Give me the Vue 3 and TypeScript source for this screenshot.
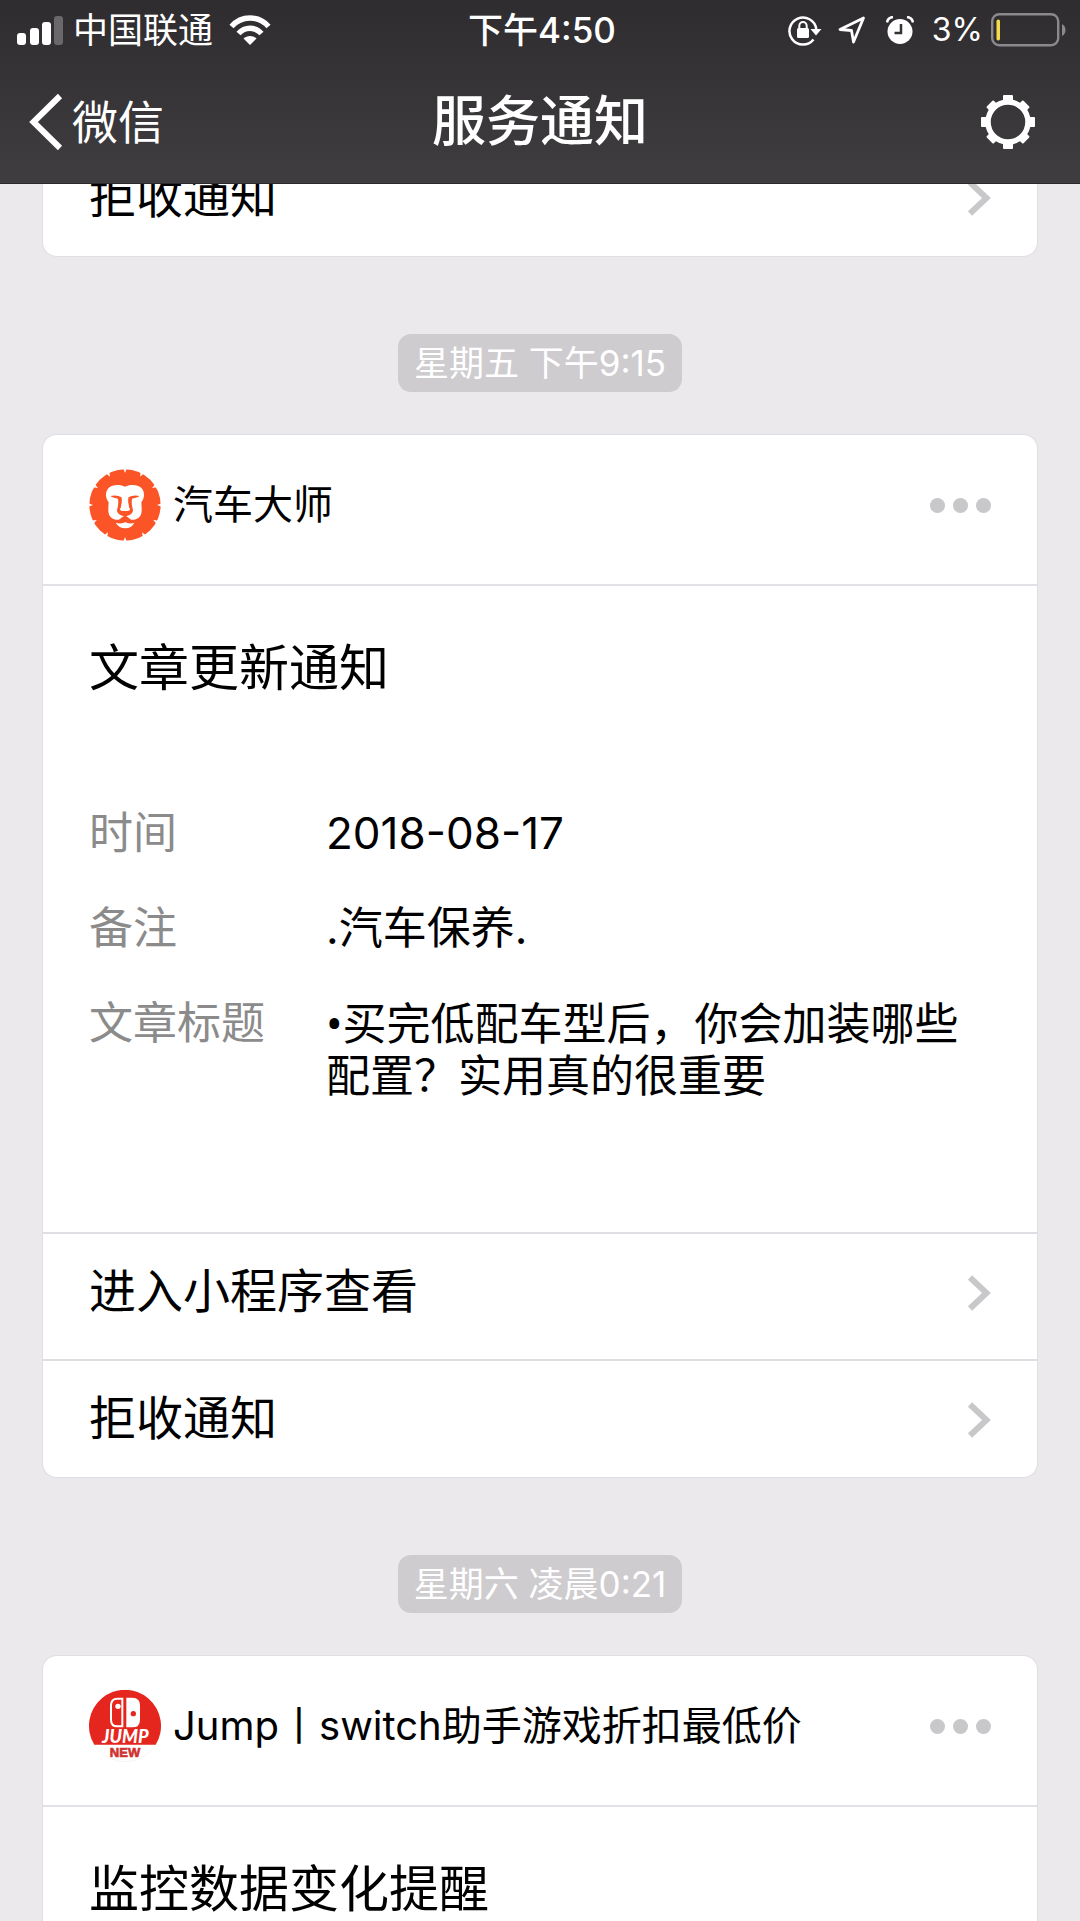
<script setup lang="ts">
interface Field {
  label: string
  value: string
}

interface Notice {
  id: string
  time: string
  app: string
  logo: 'lion' | 'jump'
  title: string
  fields: Field[]
  actions: string[]
}

const notices: Notice[] = [
  {
    id: 'car',
    time: '星期五 下午9:15',
    app: '汽车大师',
    logo: 'lion',
    title: '文章更新通知',
    fields: [
      { label: '时间', value: '2018-08-17' },
      { label: '备注', value: '.汽车保养.' },
      { label: '文章标题', value: '•买完低配车型后，你会加装哪些配置？实用真的很重要' },
    ],
    actions: ['进入小程序查看', '拒收通知'],
  },
  {
    id: 'jump',
    time: '星期六 凌晨0:21',
    app: 'Jump丨switch助手游戏折扣最低价',
    logo: 'jump',
    title: '监控数据变化提醒',
    fields: [],
    actions: [],
  },
]

const gearTeeth = [0, 45, 90, 135, 180, 225, 270, 315]
const maneNotches = [0, 28, 58, 90, 118, 148, 180, 212, 242, 270, 302, 332]
</script>

<template>
  <div class="screen">
    <header class="top">
      <div class="status">
        <div class="status-left">
          <svg class="signal" width="47" height="29" viewBox="0 0 47 29" fill="#fff">
            <rect x="0" y="17" width="9" height="12" rx="3" />
            <rect x="13" y="12" width="9" height="17" rx="3" />
            <rect x="25" y="6" width="9" height="23" rx="3" />
            <rect x="37" y="0" width="9" height="29" rx="3" fill="#6a686b" />
          </svg>
          <span>中国联通</span>
          <svg class="wifi" width="42" height="30" viewBox="0 0 42 30" fill="none" stroke="#fff">
            <path d="M2.5 11.5C12.5 .2 29.5 .2 39.5 11.5" stroke-width="5.5" />
            <path d="M9.5 18.5C16 11.5 26 11.5 32.5 18.5" stroke-width="5.5" />
            <path d="M21 30L14.5 23.5C18 20 24 20 27.5 23.5Z" fill="#fff" stroke="none" />
          </svg>
        </div>
        <span class="clock">下午4:50</span>
        <div class="status-right">
          <svg width="34" height="31" viewBox="0 0 34 31" fill="none" stroke="#fff">
            <path d="M25.5 24.5A13.5 13.5 0 1 1 28.3 14" stroke-width="2.5" />
            <path d="M22.5 14H33.5L28 20.5Z" fill="#fff" stroke="none" />
            <rect x="9" y="13" width="12" height="10" rx="1.5" fill="#fff" stroke="none" />
            <path d="M11.3 14V11a3.7 4 0 0 1 7.4 0v3" stroke-width="2" />
          </svg>
          <svg class="locate" width="28" height="28" viewBox="0 0 28 28" fill="none" stroke="#fff" stroke-width="2.8" stroke-linejoin="round">
            <path d="M25.5 2L2 13.5L13.5 14.5L15.5 26Z" />
          </svg>
          <svg width="28" height="29" viewBox="0 0 28 29">
            <circle cx="14" cy="15.5" r="12.5" fill="#fff" />
            <path d="M1 6.5Q2 1.5 7 1M27 6.5Q26 1.5 21 1" fill="none" stroke="#fff" stroke-width="2.5" />
            <path d="M15 8V17H8.5" fill="none" stroke="#343235" stroke-width="2.5" />
          </svg>
          <span class="percent">3%</span>
          <svg width="76" height="34" viewBox="0 0 76 34">
            <rect x="1.2" y="1.2" width="66" height="31" rx="7" fill="none" stroke="#8b898c" stroke-width="2.4" />
            <rect x="5.5" y="6.5" width="3.5" height="21" rx="1.7" fill="#f5dc4c" />
            <path d="M71 11Q74.5 13 74.5 17T71 23Z" fill="#8b898c" />
          </svg>
        </div>
      </div>

      <nav class="bar">
        <a class="back" href="#">
          <svg width="34" height="58" viewBox="0 0 34 58" fill="none" stroke="#fff" stroke-width="6">
            <path d="M31 3L4.5 29L31 55" />
          </svg>
          <span>微信</span>
        </a>
        <h1>服务通知</h1>
        <button class="gear" type="button" aria-label="设置">
          <svg width="56" height="56" viewBox="-28 -28 56 56">
            <circle r="20" fill="none" stroke="#fff" stroke-width="5.5" />
            <rect
              v-for="a in gearTeeth"
              :key="a"
              x="-5"
              :y="a % 90 ? -26 : -27"
              width="10"
              height="7"
              rx="1"
              fill="#fff"
              :transform="`rotate(${a})`"
            />
          </svg>
        </button>
      </nav>
    </header>

    <main class="feed">
      <section class="card scrolled">
        <button class="action" type="button">
          <span>拒收通知</span>
          <svg class="chevron" width="24" height="36" viewBox="0 0 24 36" fill="none" stroke="#c8c7ca" stroke-width="6">
            <path d="M3 2.5L19.5 18L3 33.5" />
          </svg>
        </button>
      </section>

      <template v-for="n in notices" :key="n.id">
        <time class="stamp">{{ n.time }}</time>
        <article class="card">
          <div class="head">
            <svg v-if="n.logo === 'lion'" class="logo" viewBox="28 28 216 216">
              <circle cx="136" cy="136" r="107" fill="#fb5426" />
              <path
                v-for="a in maneNotches"
                :key="a"
                d="M131 27H141L136 40Z"
                fill="#fff"
                :transform="`rotate(${a} 136 136)`"
              />
              <path
                d="M136 81C122 74 97 74 86 86C76 97 77 115 87 128C86 145 84 160 91 170C98 180 113 184 122 177L128 172H144L150 177C159 184 174 180 181 170C188 160 186 145 185 128C195 115 196 97 186 86C175 74 150 74 136 81Z"
                fill="#fff"
              />
              <path
                d="M92 109C105 105 118 108 126 113C128 126 126 140 121 150C126 155 146 155 151 150C146 140 144 126 146 113C154 108 167 105 180 109C174 113 164 116 157 117C155 129 157 142 160 151C160 162 150 166 142 169L137 178L130 169C122 166 112 162 112 151C115 142 117 129 115 117C108 116 98 113 92 109Z"
                fill="#fb5426"
              />
              <path d="M126 113C128 126 126 140 121 150C126 155 146 155 151 150C146 140 144 126 146 113Z" fill="#fff" />
              <path d="M108 189Q123 194 137 188Q150 194 164 189Q156 206 137 206T108 189Z" fill="#fff" />
            </svg>
            <svg v-else class="logo" viewBox="28 28 216 216">
              <circle cx="136" cy="136" r="107" fill="#fff" stroke="#f0eeee" stroke-width="2" />
              <path d="M44 192A108 108 0 1 1 228 192Z" fill="#e5261f" />
              <path d="M128 54H113Q94 54 94 74V117Q94 137 113 137H128Z" fill="none" stroke="#fff" stroke-width="6" />
              <circle cx="115" cy="77" r="8" fill="#fff" />
              <path d="M140 51H158Q181 51 181 74V117Q181 140 158 140H140Z" fill="#fff" />
              <circle cx="161" cy="99" r="8" fill="#e5261f" />
              <text class="logo-name" x="137" y="186" text-anchor="middle">JUMP</text>
              <text class="logo-tag" x="136" y="230" text-anchor="middle">NEW</text>
            </svg>
            <h2>{{ n.app }}</h2>
            <button class="more" type="button" aria-label="更多"><i /><i /><i /></button>
          </div>
          <div class="body">
            <h3>{{ n.title }}</h3>
            <dl v-if="n.fields.length">
              <div v-for="f in n.fields" :key="f.label" class="field">
                <dt>{{ f.label }}</dt>
                <dd :class="{ bulleted: f.value.startsWith('•') }">{{ f.value }}</dd>
              </div>
            </dl>
          </div>
          <button v-for="a in n.actions" :key="a" class="action" type="button">
            <span>{{ a }}</span>
            <svg class="chevron" width="24" height="36" viewBox="0 0 24 36" fill="none" stroke="#c8c7ca" stroke-width="6">
              <path d="M3 2.5L19.5 18L3 33.5" />
            </svg>
          </button>
        </article>
      </template>
    </main>
  </div>
</template>

<style>
body {
  margin: 0;
  background: #ebe9ec;
}
</style>

<style scoped>
.screen {
  display: flex;
  flex-direction: column;
  height: 100vh;
  overflow: hidden;
  color: #000;
  background: #ebe9ec;
  font-family: Inter, "Noto Sans CJK SC", sans-serif;
}

svg {
  display: block;
  flex: none;
}

h1,
h2,
h3,
dl,
dd {
  margin: 0;
  font-weight: 400;
}

button {
  padding: 0;
  border: 0;
  background: none;
  color: inherit;
  font: inherit;
}

.top {
  flex: none;
  box-sizing: border-box;
  height: 184px;
  color: #fff;
  background: linear-gradient(#2e2c2f, #3f3d40);
  border-bottom: 1px solid #2b292c;
}

.status,
.bar {
  display: grid;
  grid-template-columns: 1fr auto 1fr;
  align-items: center;
}

.status {
  height: 60px;
  padding: 0 13px 0 17px;
  font-size: 35px;
  line-height: 40px;
}

.status-left,
.status-right {
  display: flex;
  align-items: center;
}

.signal {
  margin-right: 9px;
}

.wifi {
  margin-left: 16px;
}

.clock {
  font-weight: 500;
}

.status-right {
  justify-content: flex-end;
}

.locate {
  margin: 0 20px 0 16px;
}

.percent {
  margin: 0 8px 0 18px;
  font-size: 32px;
}

.bar {
  height: 124px;
  padding: 0 29px;
}

.back {
  display: flex;
  align-items: center;
  gap: 9px;
  color: #fff;
  font-size: 46px;
  line-height: 56px;
  text-decoration: none;
}

.bar h1 {
  font-size: 54px;
  font-weight: 500;
  line-height: 64px;
}

.gear {
  justify-self: end;
  margin-right: 15px;
}

.feed {
  flex: 1;
  min-height: 0;
  padding: 0 43px;
  overflow-y: auto;
  scrollbar-width: none;
  display: flex;
  flex-direction: column;
}

.card {
  flex: none;
  background: #fff;
  border-radius: 14px;
  box-shadow: 0 0 0 1px #e0dee2;
}

.scrolled {
  margin-top: -46px;
}

.stamp {
  flex: none;
  align-self: center;
  margin: 78px 0 43px;
  padding: 0 16px;
  border-radius: 13px;
  color: #fff;
  background: #cecccf;
  font-size: 35px;
  line-height: 58px;
}

.head {
  display: flex;
  align-items: center;
  height: 72px;
  padding: 34px 46px 43px;
  border-bottom: 2px solid #e3e1e5;
}

.logo {
  width: 72px;
  height: 72px;
}

.logo-name {
  font: italic 900 54px Lato, sans-serif;
  fill: #fff;
}

.logo-tag {
  font: 700 39px "Liberation Sans", sans-serif;
  fill: #cf3330;
  stroke: #cf3330;
  stroke-width: 2px;
}

.head h2 {
  flex: 1;
  margin-left: 12px;
  font-size: 40px;
  line-height: 56px;
}

.more {
  display: flex;
  gap: 8px;
}

.more i {
  width: 15px;
  height: 15px;
  border-radius: 50%;
  background: #c8c7ca;
}

.body {
  padding: 50px 46px 131px;
}

.body h3 {
  font-size: 50px;
  line-height: 64px;
}

.body dl {
  display: grid;
  gap: 43px;
  margin-top: 107px;
  font-size: 44px;
  line-height: 52px;
}

.field {
  display: grid;
  grid-template-columns: 237px 1fr;
}

.field dt {
  color: #8b8b8b;
}

.bulleted {
  font-family: "Noto Sans", "Noto Sans CJK SC", sans-serif;
}

.action {
  display: flex;
  align-items: center;
  justify-content: space-between;
  width: 100%;
  height: 118px;
  padding: 0 46px 2px;
  font-size: 47px;
  line-height: 56px;
}

.chevron {
  margin-top: 4px;
}

.body ~ .action {
  border-top: 2px solid #e0dee2;
}

.action:has(+ .action) {
  height: 127px;
  padding-bottom: 11px;
}
</style>
